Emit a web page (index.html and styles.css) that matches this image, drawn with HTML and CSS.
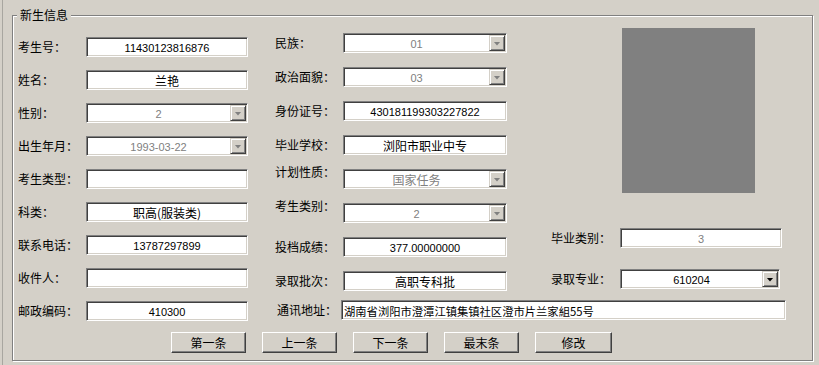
FILE: index.html
```html
<!DOCTYPE html>
<html lang="zh">
<head>
<meta charset="utf-8">
<title>新生信息</title>
<link rel="stylesheet" href="styles.css">
</head>
<body>
<div class="window">
  <div class="group">
    <div class="legend">新生信息</div>
    <div class="top">
      <div class="col col1">
        <div class="row"><span class="label">考生号：</span><div class="field num">11430123816876</div></div>
        <div class="row"><span class="label">姓名：</span><div class="field">兰艳</div></div>
        <div class="row"><span class="label">性别：</span><div class="field combo disabled"><span class="val num">2</span><span class="arrow"></span></div></div>
        <div class="row"><span class="label">出生年月：</span><div class="field combo disabled"><span class="val num">1993-03-22</span><span class="arrow"></span></div></div>
        <div class="row"><span class="label">考生类型：</span><div class="field"></div></div>
        <div class="row"><span class="label">科类：</span><div class="field">职高(服装类)</div></div>
        <div class="row"><span class="label">联系电话：</span><div class="field num">13787297899</div></div>
        <div class="row"><span class="label">收件人：</span><div class="field"></div></div>
        <div class="row"><span class="label">邮政编码：</span><div class="field num">410300</div></div>
      </div>
      <div class="right">
        <div class="upper">
          <div class="col col2">
            <div class="row"><span class="label">民族：</span><div class="field combo disabled"><span class="val num">01</span><span class="arrow"></span></div></div>
            <div class="row"><span class="label">政治面貌：</span><div class="field combo disabled"><span class="val num">03</span><span class="arrow"></span></div></div>
            <div class="row"><span class="label">身份证号：</span><div class="field num">430181199303227822</div></div>
            <div class="row"><span class="label">毕业学校：</span><div class="field">浏阳市职业中专</div></div>
            <div class="row"><span class="label raise">计划性质：</span><div class="field combo disabled"><span class="val">国家任务</span><span class="arrow"></span></div></div>
            <div class="row"><span class="label raise">考生类别：</span><div class="field combo disabled"><span class="val num">2</span><span class="arrow"></span></div></div>
            <div class="row"><span class="label">投档成绩：</span><div class="field num">377.00000000</div></div>
            <div class="row"><span class="label">录取批次：</span><div class="field">高职专科批</div></div>
          </div>
          <div class="col3">
            <div class="photo"></div>
            <div class="row grad"><span class="label">毕业类别：</span><div class="field num disabled">3</div></div>
            <div class="row major"><span class="label">录取专业：</span><div class="field combo"><span class="val num">610204</span><span class="arrow"></span></div></div>
          </div>
        </div>
        <div class="row addr"><span class="label">通讯地址：</span><div class="field address">湖南省浏阳市澄潭江镇集镇社区澄市片兰家組55号</div></div>
      </div>
    </div>
    <div class="buttons">
      <div class="btn">第一条</div>
      <div class="btn">上一条</div>
      <div class="btn">下一条</div>
      <div class="btn">最末条</div>
      <div class="btn wide">修改</div>
    </div>
  </div>
</div>
</body>
</html>
```
FILE: styles.css
```css
html, body {
  margin: 0;
  padding: 0;
}
body {
  background: #D4D0C8;
  font-family: "Noto Sans CJK SC", "Noto Sans", sans-serif;
  font-size: 12px;
  color: #000;
  width: 819px;
  height: 365px;
  overflow: hidden;
}
.window {
  margin-left: 2px;
  border-left: 1px solid #a8a6a0;
  height: 365px;
  box-sizing: border-box;
  padding: 15px 0 0 9px;
}
.group {
  position: relative;
  width: 801px;
  height: 346px;
  box-sizing: border-box;
  border: 1px solid #808080;
  box-shadow: inset 1px 1px #fff, 1px 1px #fff;
  padding: 12px 0 0 5px;
}
.legend {
  position: absolute;
  top: -9px;
  left: 4px;
  padding: 0 3px;
  line-height: 16px;
  background: #D4D0C8;
}
.top {
  display: flex;
}
.col {
  display: flex;
  flex-direction: column;
}
.col1 {
  width: 230px;
  margin-top: 9px;
  gap: 13px;
}
.right {
  margin-left: 27px;
  display: flex;
  flex-direction: column;
}
.upper {
  display: flex;
}
.col2 {
  width: 232px;
  margin-top: 5px;
  gap: 14px;
}
.col3 {
  margin-left: 44px;
  display: flex;
  flex-direction: column;
}
.row {
  display: flex;
  align-items: center;
  height: 20px;
}
.label {
  width: 68px;
  flex: none;
  white-space: nowrap;
  line-height: 16px;
}
.label.raise {
  align-self: flex-start;
  margin-top: -5px;
}
.field {
  width: 162px;
  height: 20px;
  box-sizing: border-box;
  border: 1px solid;
  border-color: #808080 #fff #fff #808080;
  box-shadow: inset 1px 1px #404040, inset -1px -1px #D4D0C8;
  background: #fff;
  display: flex;
  align-items: center;
  justify-content: center;
  white-space: nowrap;
  line-height: 16px;
  padding-top: 1px;
}
.num {
  font-family: "Liberation Sans", "Noto Sans CJK SC", sans-serif;
  font-size: 11px;
}
.col2 .field {
  width: 164px;
}
.disabled {
  color: #808080;
}
.combo {
  justify-content: flex-start;
  padding-top: 0;
}
.val {
  flex: 1;
  text-align: center;
  padding-top: 1px;
}
.arrow {
  flex: none;
  width: 16px;
  height: 16px;
  margin-right: 1px;
  box-sizing: border-box;
  border: 1px solid;
  border-color: #D4D0C8 #404040 #404040 #D4D0C8;
  box-shadow: inset 1px 1px #fff, inset -1px -1px #808080;
  background: #D4D0C8;
  display: flex;
  align-items: center;
  justify-content: center;
}
.arrow::after {
  content: "";
  width: 7px;
  height: 4px;
  margin-top: 1px;
  background: #000;
  clip-path: polygon(0 0, 100% 0, 50% 100%);
}
.disabled .arrow::after {
  background: #808080;
}
.photo {
  margin-left: 71px;
  width: 133px;
  height: 165px;
  background: #808080;
}
.col3 .label {
  width: 69px;
}
.grad {
  margin-top: 35px;
}
.major {
  margin-top: 21px;
}
.major .field {
  width: 160px;
}
.addr {
  margin-top: 9px;
}
.addr .label {
  width: 64px;
  padding-left: 2px;
}
.field.address {
  width: 445px;
  justify-content: flex-start;
  padding-left: 2px;
  font-size: 11.3px;
}
.buttons {
  display: flex;
  gap: 16px;
  margin: 11px 0 0 153px;
}
.btn {
  width: 75px;
  height: 21px;
  box-sizing: border-box;
  border: 1px solid;
  border-color: #fff #404040 #404040 #fff;
  box-shadow: inset -1px -1px #808080;
  background: #D4D0C8;
  display: flex;
  align-items: center;
  justify-content: center;
  line-height: 16px;
}
.btn.wide {
  width: 77px;
}
```
